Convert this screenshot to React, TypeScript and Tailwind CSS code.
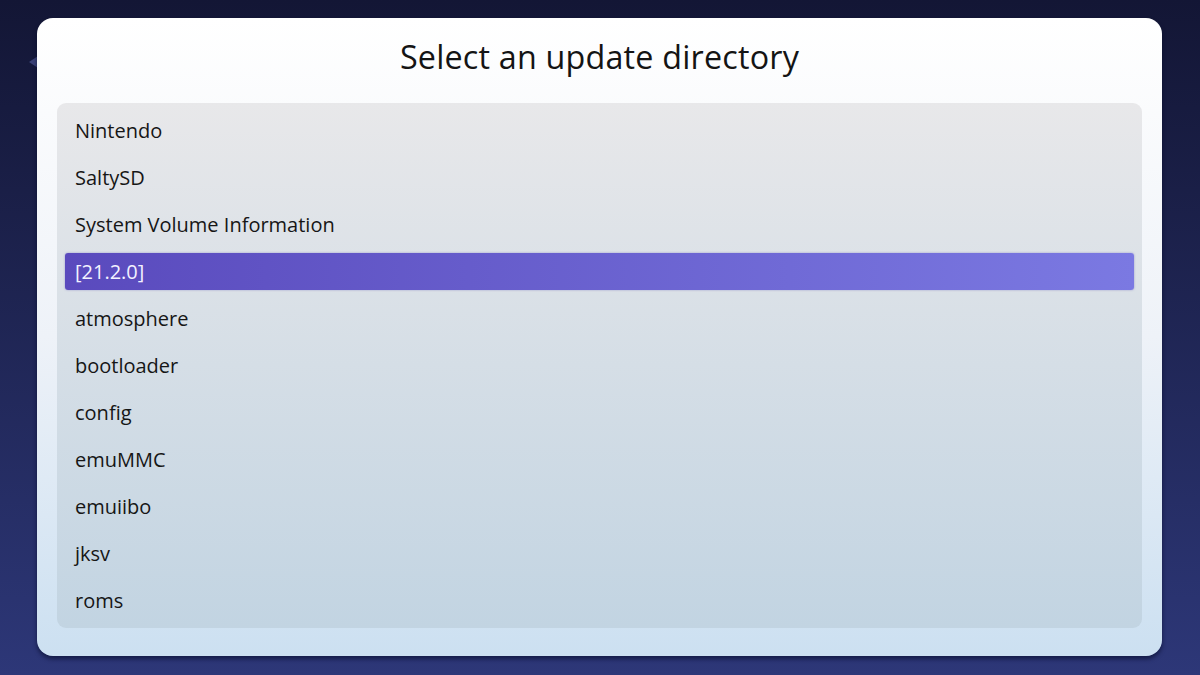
import React from "react";

const items = [
  "Nintendo",
  "SaltySD",
  "System Volume Information",
  "[21.2.0]",
  "atmosphere",
  "bootloader",
  "config",
  "emuMMC",
  "emuiibo",
  "jksv",
  "roms",
];

export default function App() {
  return (
    <div
      className="relative w-[1200px] h-[675px] overflow-hidden bg-gradient-to-b from-[#131635] to-[#2d3778] pt-[18px] pl-[37px]"
      style={{ fontFamily: '"Open Sans", "Noto Sans", sans-serif' }}
    >
      <div className="absolute left-[29px] top-[56px] w-0 h-0 border-y-[6px] border-y-transparent border-r-[9px] border-r-[#4a5390] opacity-70" />
      <div className="relative w-[1125px] h-[638px] rounded-[16px] bg-gradient-to-b from-[#ffffff] via-[#eef2f8] to-[#cce0f1] shadow-[0_3px_4px_rgba(5,10,40,0.6)] flex flex-col">
        <div className="h-[76px] mb-[9px] flex items-center justify-center text-[32.3px] text-[#141414] tracking-[0.2px]">
          Select an update directory
        </div>
        <div className="mx-[20px] h-[525px] rounded-[9px] bg-gradient-to-b from-[#e8e8ea] to-[#c2d4e2] py-[4px] flex flex-col">
          {items.map((it) => {
            const sel = it === "[21.2.0]";
            return (
              <div key={it} className="h-[47px] px-[8px] py-[5px] flex">
                <div
                  className={
                    sel
                      ? "flex-1 flex items-center pl-[10px] rounded-[3px] bg-gradient-to-r from-[#5a4abd] to-[#7b79e2] text-[#f3f2ff] text-[20px] shadow-[0_0_2px_rgba(80,70,180,0.5)]"
                      : "flex-1 flex items-center pl-[10px] text-[#161616] text-[20px]"
                  }
                >
                  {it}
                </div>
              </div>
            );
          })}
        </div>
      </div>
    </div>
  );
}
